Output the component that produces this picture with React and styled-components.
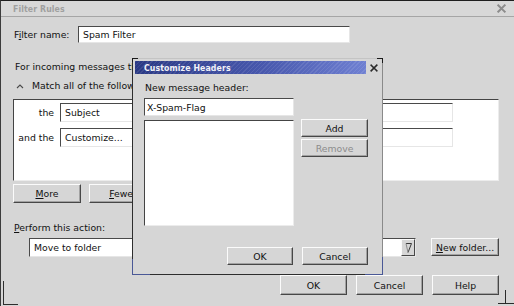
import styled, { createGlobalStyle } from "styled-components";

const GlobalStyle = createGlobalStyle`
  html, body {
    margin: 0;
    padding: 0;
    background: #d6d6d6;
  }
  body {
    font-family: "DejaVu Sans", "Bitstream Vera Sans", sans-serif;
    font-size: 9.3px;
    color: #111;
  }
  * {
    box-sizing: border-box;
  }
`;

const Window = styled.div`
  position: relative;
  width: 514px;
  height: 306px;
  background: #d6d6d6;
  border-top: 1px solid #1e1e1e;
  border-left: 1px solid #3c3c3c;
  overflow: hidden;
`;

const TitleBar = styled.div`
  height: 16px;
  display: flex;
  align-items: center;
  justify-content: space-between;
  padding: 0 8px 0 12px;
  background: #d8d8d8;
  border-bottom: 1px solid #a6a6a6;
`;

const TitleText = styled.span`
  font-family: "DejaVu Sans Condensed", "DejaVu Sans", sans-serif;
  font-weight: bold;
  font-size: 8.7px;
  color: ${(p) => p.color || "#a0a0a0"};
  letter-spacing: 0.1px;
`;

const Body = styled.div`
  display: flex;
  flex-direction: column;
  padding: 0 15px 0 12px;
`;

const Row = styled.div`
  display: flex;
  align-items: ${(p) => p.align || "center"};
  gap: ${(p) => p.gap || 0}px;
  margin-top: ${(p) => p.top || 0}px;
  padding-left: ${(p) => p.indent || 0}px;
  justify-content: ${(p) => p.justify || "flex-start"};
`;

const Label = styled.span`
  display: block;
  line-height: 12px;
  width: ${(p) => (p.width ? `${p.width}px` : "auto")};
  padding-left: ${(p) => p.indent ?? 1}px;
  margin-top: ${(p) => p.top || 0}px;
  white-space: nowrap;
`;

const U = styled.span`
  text-decoration: underline;
  text-underline-offset: 1px;
`;

const Field = styled.div`
  display: flex;
  align-items: center;
  width: ${(p) => p.width}px;
  height: ${(p) => p.height || 19}px;
  background: #fff;
  border: 1px solid;
  border-color: #4a4a4a #e6e6e6 #e6e6e6 #4a4a4a;
  padding-left: ${(p) => p.pad ?? 4}px;
  white-space: nowrap;
  overflow: hidden;
`;

const FieldText = styled.span`
  flex: 1;
`;

const RuleBox = styled.div`
  margin-top: 7px;
  height: 82px;
  background: #fff;
  border: 1px solid;
  border-color: #444 #ececec #ececec #444;
  padding-top: 3px;
  display: grid;
  grid-template-columns: 40px 393px;
  grid-auto-rows: 19px;
  column-gap: 6px;
  row-gap: 6px;
  align-content: start;
  align-items: center;
`;

const RuleLabel = styled.span`
  text-align: right;
  white-space: nowrap;
`;

const Button = styled.button`
  font: inherit;
  color: ${(p) => (p.disabled ? "#8c8c8c" : "#111")};
  width: ${(p) => p.width || 66}px;
  height: ${(p) => p.height || 19}px;
  padding: 0;
  background: #d6d6d6;
  border: 1px solid;
  border-color: #fbfbfb #474747 #474747 #fbfbfb;
  box-shadow: inset -1px -1px 0 #a2a2a2;
  text-align: center;
  white-space: nowrap;
`;

const ArrowButton = styled.div`
  width: 14px;
  height: 100%;
  display: flex;
  align-items: center;
  justify-content: center;
  background: #d6d6d6;
  border: 1px solid;
  border-color: #fbfbfb #474747 #474747 #fbfbfb;
`;

const Modal = styled.div`
  position: absolute;
  left: 131px;
  top: 57px;
  width: 251px;
  height: 217px;
  display: flex;
  flex-direction: column;
  padding: 2px 1px 0 2px;
  background: #d6d6d6;
  border: 1px solid;
  border-color: #c4c4c4 #8a8a8a #2e2e2e #2e2e2e;
`;

const ModalTitleBar = styled.div`
  height: 13px;
  display: flex;
`;

const ModalTitle = styled.div`
  flex: 1;
  display: flex;
  align-items: center;
  padding-left: 9px;
  background:
    repeating-linear-gradient(135deg, rgba(255, 255, 255, 0.09) 0 1px, transparent 1px 3px),
    linear-gradient(to right, #2a3984, #4858ad 55%, #6f80d2);
`;

const CloseBox = styled.div`
  width: 15px;
  display: flex;
  align-items: center;
  justify-content: center;
`;

const ModalBody = styled.div`
  flex: 1;
  display: flex;
  flex-direction: column;
  padding: 0 13px 9px 9px;
`;

const ListBox = styled.div`
  width: 150px;
  height: 106px;
  margin-top: 1px;
  background: #fff;
  border: 1px solid;
  border-color: #444 #ececec #ececec #444;
`;

const ButtonColumn = styled.div`
  display: flex;
  flex-direction: column;
  gap: 2px;
`;

const Spacer = styled.div`
  flex: 1;
`;

const Corner = styled.span`
  position: absolute;
  width: ${(p) => p.w}px;
  height: ${(p) => p.h}px;
  ${(p) => p.pos}
  border-color: ${(p) => p.color};
  border-style: solid;
  border-width: 0;
  ${(p) => p.edges}
`;

const Grip = styled.span`
  position: absolute;
  right: 0;
  bottom: 2px;
  width: 16px;
  height: 14px;
  border-bottom: 1px solid #2a2a2a;
  &::before {
    content: "";
    position: absolute;
    left: 7px;
    top: 0;
    bottom: 0;
    width: 1px;
    background: #2a2a2a;
  }
`;

function CloseIcon({ color, size = 8, weight = 2 }) {
  return (
    <svg width={size} height={size} viewBox="0 0 10 10">
      <path d="M1.5 1.5 L8.5 8.5 M8.5 1.5 L1.5 8.5" stroke={color} strokeWidth={weight} strokeLinecap="square" />
    </svg>
  );
}

function Chevron() {
  return (
    <svg width="8" height="6" viewBox="0 0 8 6">
      <polyline points="1,5 4,2 7,5" fill="none" stroke="#4a4a4a" strokeWidth="1.1" />
    </svg>
  );
}

function DropArrow() {
  return (
    <svg width="9" height="13" viewBox="0 0 9 13">
      <path d="M2 2.5 L7.5 2.5 L4 11.5" fill="none" stroke="#3a3a3a" strokeWidth="1" />
      <path d="M2 2.5 L4 11.5" fill="none" stroke="#8a8a8a" strokeWidth="1" />
    </svg>
  );
}

export default function App() {
  return (
    <>
      <GlobalStyle />
      <Window>
        <TitleBar>
          <TitleText>Filter Rules</TitleText>
          <CloseIcon color="#8c8c8c" size={9} weight={2.2} />
        </TitleBar>

        <Body>
          <Row top={9}>
            <Label width={65}>F<U>i</U>lter name:</Label>
            <Field width={272} height={17}>Spam Filter</Field>
          </Row>

          <Label top={18} indent={2}>For incoming messages that:</Label>

          <Row top={7} gap={8} indent={3}>
            <Chevron />
            <Label indent={0}>Match all of the following</Label>
          </Row>

          <RuleBox>
            <RuleLabel>the</RuleLabel>
            <Field width={393}>Subject</Field>
            <RuleLabel>and the</RuleLabel>
            <Field width={393}>Customize...</Field>
          </RuleBox>

          <Row top={3} gap={8}>
            <Button width={68}><U>M</U>ore</Button>
            <Button width={68}><U>F</U>ewer</Button>
          </Row>

          <Label top={19}><U>P</U>erform this action:</Label>

          <Row top={4} gap={15} indent={16} align="flex-start">
            <Field width={388} height={19}>
              <FieldText>Move to folder</FieldText>
              <ArrowButton><DropArrow /></ArrowButton>
            </Field>
            <Button width={68} height={18}><U>N</U>ew folder...</Button>
          </Row>

          <Row top={18} gap={9} justify="flex-end">
            <Button width={67} height={20}>OK</Button>
            <Button width={67} height={20}>Cancel</Button>
            <Button width={67} height={20}>Help</Button>
          </Row>
        </Body>

        <Corner w={15} h={24} color="#2e2e2e" pos="left: 2px; bottom: 1px;" edges="border-left-width: 1px; border-bottom-width: 1px;" />
        <Grip />

        <Modal>
          <ModalTitleBar>
            <ModalTitle>
              <TitleText color="#f2f2f8">Customize Headers</TitleText>
            </ModalTitle>
            <CloseBox>
              <CloseIcon color="#2a2a2a" size={8} weight={2} />
            </CloseBox>
          </ModalTitleBar>

          <ModalBody>
            <Label top={8}>New message header:</Label>
            <Row top={4}>
              <Field width={150} height={18} pad={2}>X-Spam-Flag</Field>
            </Row>
            <Row top={3} gap={7} align="flex-start">
              <ListBox />
              <ButtonColumn>
                <Button width={67} height={18}>Add</Button>
                <Button width={67} height={18} disabled>Remove</Button>
              </ButtonColumn>
            </Row>
            <Spacer />
            <Row gap={9} justify="flex-end">
              <Button width={66} height={18}>OK</Button>
              <Button width={66} height={18}>Cancel</Button>
            </Row>
          </ModalBody>

          <Corner w={6} h={4} color="#1a1a1a" pos="left: -1px; top: -1px;" edges="border-left-width: 1px; border-top-width: 1px;" />
          <Corner w={6} h={5} color="#1a1a1a" pos="right: -1px; top: -1px;" edges="border-right-width: 1px; border-top-width: 1px;" />
          <Corner w={18} h={16} color="#4a5896" pos="left: -1px; bottom: -1px;" edges="border-left-width: 1px; border-bottom-width: 1px;" />
          <Corner w={18} h={18} color="#4a5896" pos="right: -1px; bottom: -1px;" edges="border-right-width: 1px; border-bottom-width: 1px;" />
        </Modal>
      </Window>
    </>
  );
}
